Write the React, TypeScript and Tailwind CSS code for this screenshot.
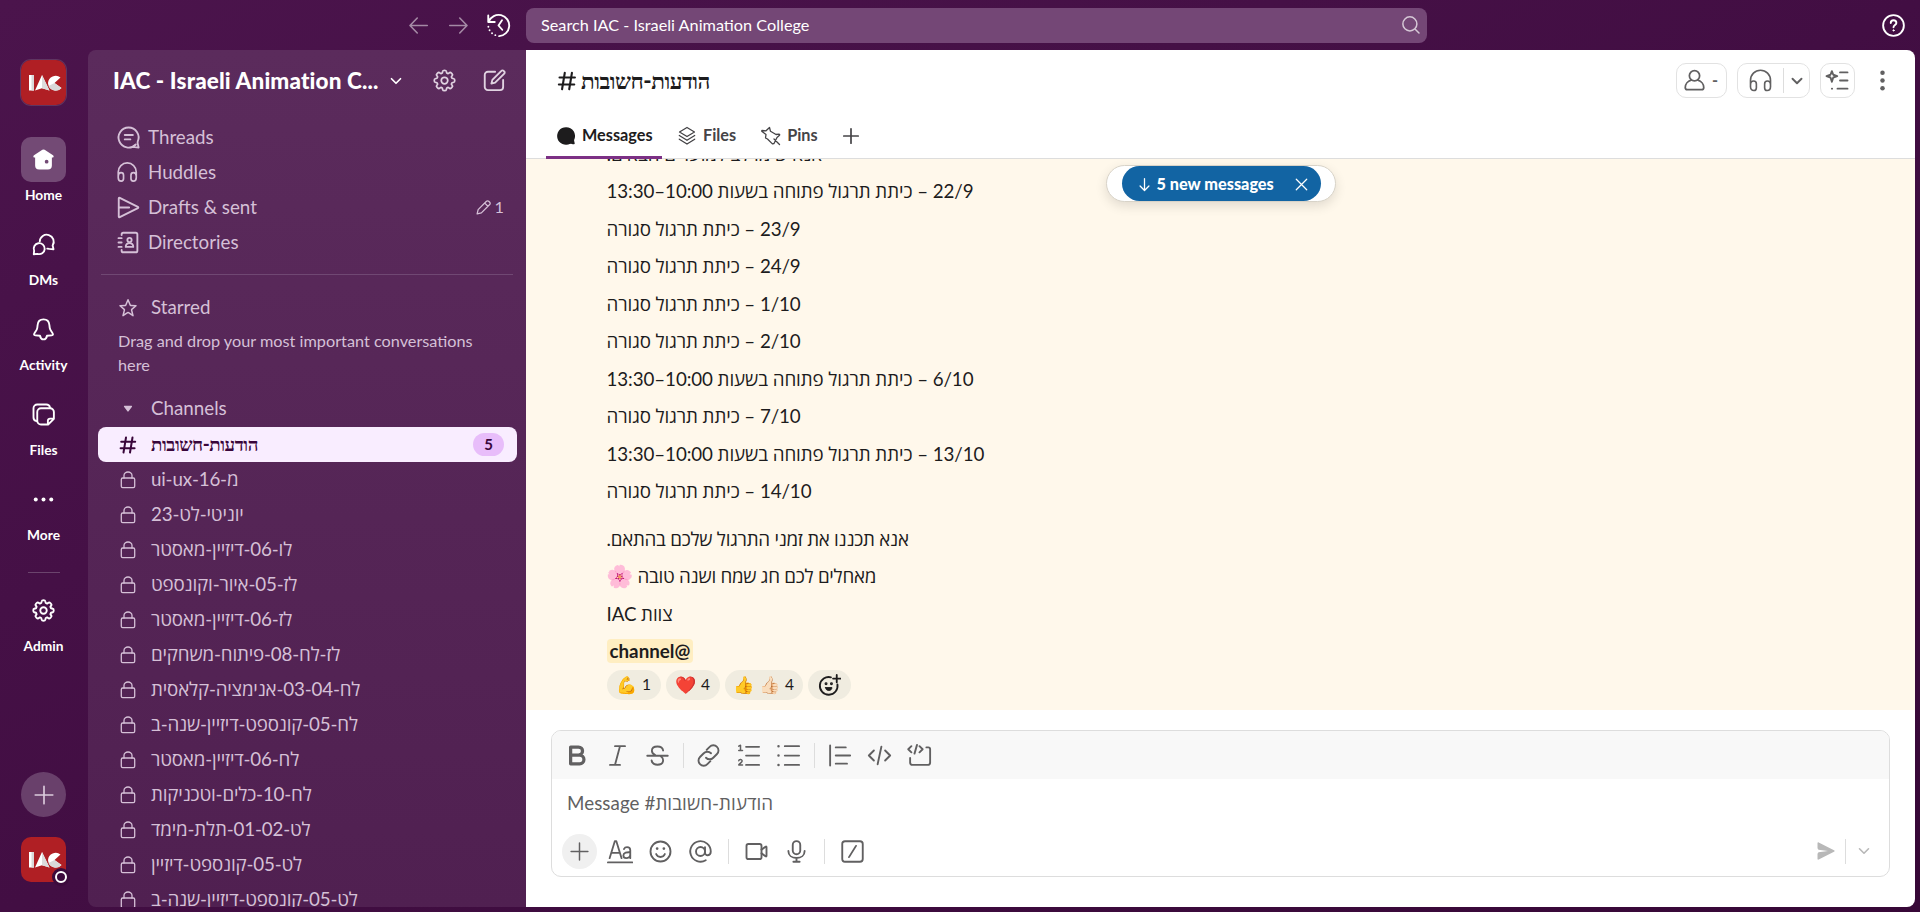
import React from "react";

type P = { d?: React.ReactNode; s?: number; w?: number; c?: string };

/* Line icon on a 20-unit grid */
function Ico({ d, s = 25, w = 1.5, c = "" }: P) {
  return (
    <svg width={s} height={s} viewBox="0 0 20 20" fill="none" stroke="currentColor" strokeWidth={w} strokeLinecap="round" strokeLinejoin="round" className={"shrink-0 " + c}>
      {d}
    </svg>
  );
}

const gear = (
  <>
    <path d="M8.6 2.4c.2-.9 2.600-.9 2.800 0l.4 1.500 1.100.5 1.400-.9c.6-.4 2.500 1.500 2.100 2.100l-.9 1.400.5 1.100 1.500.4c.9.2.9 2.600 0 2.800l-1.500.4-.5 1.100.9 1.400c.4.6-1.500 2.500-2.100 2.100l-1.400-.9-1.100.5-.4 1.500c-.2.9-2.600.9-2.800 0l-.4-1.500-1.100-.5-1.400.9c-.6.4-2.500-1.500-2.100-2.100l.9-1.400-.5-1.100-1.500-.4c-.9-.2-.9-2.600 0-2.800l1.500-.4.5-1.100-.9-1.400c-.4-.6 1.500-2.500 2.100-2.100l1.400.9 1.100-.5z" transform="translate(0 .1)" />
    <circle cx="10" cy="10" r="2.600" />
  </>
);
const hash = <path d="M8 2.500 5.500 17.500M14.500 2.500 12 17.500M3.200 6.750h14M2.600 13.200h14" />;
const lock = (
  <>
    <path d="M6 8V5.500C6 3.500 7.800 2 10 2s4 1.500 4 3.500V8" />
    <rect x="3.300" y="8" width="13.400" height="9.700" rx="1.400" />
  </>
);
const phones = (
  <path d="M2 15V9.800a8 8 0 0 1 16 0V15M2 13.500c0-1.900 1.100-3.100 2.500-3.100S6.700 11.400 6.700 12.700V15.700c0 1.300-.7 2.300-2 2.300C3 18 2 16.800 2 15zM18 13.500c0-1.900-1.100-3.100-2.500-3.100s-2.200 1-2.200 2.300v3c0 1.300.7 2.300 2 2.300C17 18 18 16.800 18 15z" />
);
const chev = <path d="m5.500 7.750 4.500 4.500 4.500-4.500" />;
const plus = <path d="M10 2v16M2 10h16" />;

function Logo() {
  return (
    <svg width="45" height="45" viewBox="0 0 45 45">
      <rect width="45" height="45" rx="10" fill="#b01f24" />
      <path d="M8 15h5v15.500H8z" fill="#fff" />
      <path d="M10.500 15H13v15.500h-2.500z" fill="#d9d9d9" />
      <path d="M21 15 28.500 30.500l-7.500-2.300-7 2.300z" fill="#fff" />
      <path d="M21 15 28.500 30.500l-7.500-2.300z" fill="#dcdcdc" />
      <path d="M39.500 17.500A7.800 7.800 0 0 0 27 23a7.800 7.800 0 0 0 13.500 5L33.500 23z" fill="#fff" />
      <path d="M27.500 26a7.800 7.800 0 0 0 13 2L33.500 23z" fill="#d9d9d9" />
    </svg>
  );
}

function RailItem({ label, active, children }: { label: string; active?: boolean; children: React.ReactNode }) {
  return (
    <div className="flex h-[85px] w-full shrink-0 flex-col items-center text-white">
      <div className={"flex size-[45px] items-center justify-center rounded-[10px] " + (active ? "bg-[#734a75]" : "")}>{children}</div>
      <span className="mt-[4px] text-[13.750px] leading-[18px] font-bold">{label}</span>
    </div>
  );
}

function NavRow({ label, icon, children }: { label: string; icon: React.ReactNode; children?: React.ReactNode }) {
  return (
    <div className="flex h-[35px] shrink-0 items-center pr-[22px] pl-[28px]">
      <Ico d={icon} />
      <span className="ml-[7px]">{label}</span>
      {children}
    </div>
  );
}

const channels = [
  "מ-16-ui-ux",
  "יוניטי-לט-23",
  "לו-06-דיזיין-מאסטר",
  "לז-05-איור-וקונספט",
  "לז-06-דיזיין-מאסטר",
  "לז-לח-08-פיתוח-משחקים",
  "לח-03-04-אנימציה-קלאסית",
  "לח-05-קונספט-דיזיין-שנה-ב",
  "לח-06-דיזיין-מאסטר",
  "לח-10-כלים-וטכניקות",
  "לט-01-02-תלת-מימד",
  "לט-05-קונספט-דיזיין",
  "לט-05-קונספט-דיזיין-שנה-ב",
];

const days = [
  "אנא שימו לב למועדים הבאים:",
  "22/9 – כיתת תרגול פתוחה בשעות 10:00–13:30",
  "23/9 – כיתת תרגול סגורה",
  "24/9 – כיתת תרגול סגורה",
  "1/10 – כיתת תרגול סגורה",
  "2/10 – כיתת תרגול סגורה",
  "6/10 – כיתת תרגול פתוחה בשעות 10:00–13:30",
  "7/10 – כיתת תרגול סגורה",
  "13/10 – כיתת תרגול פתוחה בשעות 10:00–13:30",
  "14/10 – כיתת תרגול סגורה",
];

function TopBar() {
  return (
    <header className="flex h-[50px] shrink-0 items-start pt-[8px]">
      <div className="flex h-[35px] w-[526px] items-center pl-[406px] text-white">
        <Ico s={25} c="opacity-50" w={1.300} d={<path d="M17 10H3.500M9 4 3.200 10 9 16" />} />
        <Ico s={25} c="ml-[15px] opacity-50" w={1.300} d={<path d="M3 10h13.500M11 4l5.800 6L11 16" />} />
        <Ico s={25} c="ml-[15px]" d={
          <>
            <path d="M1.800 2v5.200h5.200M2.200 6.800A8.500 8.500 0 1 1 10.500 18.500" />
            <path d="M12.800 5.800 10 10l3 3.400" />
            <path strokeDasharray="0 3" d="M1.900 11a8.500 8.500 0 0 0 6.500 7" />
          </>
        } />
      </div>
      <div className="flex h-[35px] w-[901px] items-center justify-between rounded-[8px] bg-[#744776] pr-[4px] pl-[15px] text-[16.250px] text-white">
        <span>Search IAC - Israeli Animation College</span>
        <Ico s={25} w={1.200} c="-mt-[3px] opacity-70" d={<><circle cx="9.500" cy="9.500" r="5.600" /><path d="m13.800 13.800 3 3" /></>} />
      </div>
      <div className="ml-auto flex h-[35px] items-center pr-[14px] text-white">
        <Ico s={25} d={<><circle cx="10" cy="10" r="8.300" /><path d="M7.800 8c0-1.300 1-2.200 2.200-2.200s2.300.8 2.300 2.100c0 1.600-2.300 1.800-2.300 3.500" /><circle cx="10" cy="13.900" r=".5" fill="currentColor" strokeWidth=".8" /></>} />
      </div>
    </header>
  );
}

function Rail() {
  return (
    <nav className="flex w-[88px] shrink-0 flex-col items-center pt-[10px] pr-[1px]">
      <div className="mb-[32px] size-[45px] shrink-0 rounded-[10px] shadow-[0_0_0_1px_#5f3561]"><Logo /></div>
      <RailItem label="Home" active>
        <svg width="25" height="25" viewBox="0 0 20 20" fill="#fff">
          <path fillRule="evenodd" d="M9.100 2.200a1.700 1.700 0 0 1 1.800 0l6.700 4.300c1 .7.500 1.900-.5 1.900h-.4v6.400a3.200 3.200 0 0 1-3.200 3.200h-7a3.200 3.200 0 0 1-3.200-3.200V8.400h-.4c-1 0-1.500-1.200-.5-1.900zM12.500 10.200a1.500 1.500 0 1 0 0 3 1.500 1.500 0 0 0 0-3" />
        </svg>
      </RailItem>
      <RailItem label="DMs">
        <Ico d={<><path d="M7 7.500A5.600 5.600 0 1 1 17.300 10.800L18 13.800 14.600 13.500 13 13.300" /><path d="M2.200 17.800 2.500 15a4.400 4.400 0 1 1 2.700 2.500z" /></>} />
      </RailItem>
      <RailItem label="Activity">
        <Ico d={<path d="M10 1.900c-2.700 0-4.500 1.800-4.700 4.500l-.3 2.400c-.2 1.400-1 2.300-2 3.800-.9 1.300-.8 2 .5 2.100l3.700.3c.3 1.700 1.300 2.900 2.800 2.900s2.500-1.200 2.800-2.900l3.700-.3c1.300-.1 1.400-.8.5-2.100-1-1.500-1.800-2.400-2-3.800l-.3-2.400C14.500 3.700 12.700 1.900 10 1.900z" />} />
      </RailItem>
      <RailItem label="Files">
        <Ico d={<><path d="M4.500 15.300A3 3 0 0 1 2 12.200V5A3 3 0 0 1 5 2h7.300a3 3 0 0 1 2.900 2.300" /><path d="M8 5h7.300a3 3 0 0 1 3 3v5.500L13.700 18H8a3 3 0 0 1-3-3V8a3 3 0 0 1 3-3zM13.500 18v-3a1.700 1.700 0 0 1 1.700-1.700h3" /></>} />
      </RailItem>
      <RailItem label="More">
        <svg width="25" height="25" viewBox="0 0 20 20" fill="#fff"><circle cx="3.800" cy="10" r="1.600" /><circle cx="10" cy="10" r="1.600" /><circle cx="16.200" cy="10" r="1.600" /></svg>
      </RailItem>
      <div className="mt-[10px] mb-[15px] h-px w-[32px] shrink-0 bg-[#6b446d]" />
      <RailItem label="Admin"><Ico d={gear} /></RailItem>
      <div className="mt-auto mb-[20px] flex size-[45px] shrink-0 items-center justify-center rounded-full bg-[#69406b] text-[#dccbdd]">
        <Ico s={22} w={1.500} d={plus} />
      </div>
      <div className="relative mb-[25px] size-[45px] shrink-0">
        <Logo />
        <div className="absolute top-[31px] left-[31px] flex size-[18px] items-center justify-center rounded-full bg-[#3c0b3c]">
          <div className="size-[12px] rounded-full border-2 border-white" />
        </div>
      </div>
    </nav>
  );
}

function Sidebar() {
  return (
    <aside className="flex w-[438px] shrink-0 flex-col overflow-hidden rounded-l-[8px] bg-linear-to-b from-[#5b2b5c] to-[#502051] text-[18.750px] text-[#d5c0d7]">
      <div className="flex h-[61px] shrink-0 items-center pl-[25px] text-white">
        <span className="font-['Lato_Black','Lato',sans-serif] text-[22.500px] font-black tracking-[0.140px] whitespace-nowrap">IAC - Israeli Animation C...</span>
        <Ico s={20} w={1.700} c="ml-[7px]" d={chev} />
        <Ico c="ml-[26px] text-[#e0d2e1]" w={1.400} d={gear} />
        <Ico c="ml-[25px] text-[#e0d2e1]" d={<><path d="M10.500 3H4.800A2.500 2.500 0 0 0 2.200 5.500v9.700a2.500 2.500 0 0 0 2.500 2.500h9.700a2.500 2.500 0 0 0 2.500-2.500V9.500" /><path d="m7.500 12.500.8-3L15.500 2.300a1.200 1.200 0 0 1 1.800 0l.5.5a1.200 1.200 0 0 1 0 1.700L10.500 11.700z" /></>} />
      </div>
      <div className="h-[9px] shrink-0" />
      <NavRow label="Threads" icon={<><path d="M15.800 15.600a8 8 0 1 1 1.600-2.400c-.3.800-.1 1.500.1 2.300l.6 2.500-3-.3c-.8-.1-1.400-.3-2.200 0" /><path d="M7 8h6.500M7 11.500h4.500" /></>} />
      <NavRow label="Huddles" icon={<g transform="translate(0 .7) scale(.9)">{phones}</g>} />
      <NavRow label="Drafts & sent" icon={<><path d="M2.200 2.800v14.400c0 .6.300.7.800.5l14.500-7.200c.5-.3.500-.7 0-1L3 2.300c-.5-.2-.8-.1-.8.500zM2.500 10h8" /></>}>
        <span className="ml-auto flex items-center gap-[3px] text-[16.250px]">
          <Ico s={17} w={1.500} d={<path d="m2.500 17.500 1.200-5L13.500 2.700a1.800 1.800 0 0 1 2.600 0l1.200 1.200a1.800 1.800 0 0 1 0 2.600L7.500 16.300zM11.500 4.800l3.700 3.700" />} />1
        </span>
      </NavRow>
      <NavRow label="Directories" icon={<><path d="M4.500 4V3.500A1.300 1.300 0 0 1 5.800 2.200h10a1.300 1.300 0 0 1 1.300 1.300v13a1.300 1.300 0 0 1-1.300 1.300h-10a1.300 1.300 0 0 1-1.300-1.300V16M2 6.500h2.500M2 10h2.500M2 13.500h2.500" /><circle cx="10.800" cy="8" r="1.700" /><path d="M7.800 13.500c0-2 1.200-3 3-3s3 1 3 3z" /></>} />
      <div className="mx-[13px] mt-[14px] mb-[15px] h-px shrink-0 bg-[#704873]" />
      <div className="flex h-[35px] shrink-0 items-center pl-[30px]">
        <Ico s={20} w={1.500} d={<path d="m10 1.800 2.200 5.200c.1.300.3.400.6.400l5.200.4-4.200 3.600c-.2.200-.3.400-.2.700l1.400 5.600-4.500-3c-.3-.2-.6-.2-.9 0l-4.600 3 1.400-5.600c.1-.3 0-.5-.2-.7L2 7.800l5.200-.4c.3 0 .5-.1.600-.4z" />} />
        <span className="ml-[13px]">Starred</span>
      </div>
      <p className="w-[400px] shrink-0 pt-[4px] pl-[30px] text-[16.250px] leading-[24px]">Drag and drop your most important conversations here</p>
      <div className="mt-[14px] flex h-[35px] shrink-0 items-center pl-[35px]">
        <svg width="10" height="8" viewBox="0 0 10 8"><path d="M1.500.8h7a.7.700 0 0 1 .5 1L5.600 6.300a.8.800 0 0 1-1.200 0L1 1.800a.7.700 0 0 1 .5-1z" fill="currentColor" /></svg>
        <span className="ml-[18px]">Channels</span>
      </div>
      <div className="mt-px mr-[9px] ml-[10px] flex h-[35px] shrink-0 items-center rounded-[8px] bg-[#f9edff] pr-[13px] pl-[20px] text-[#39063a]">
        <Ico s={20} w={2} d={hash} />
        <bdi dir="rtl" className="ml-[13px] font-['Lato','Liberation_Serif',serif] font-black tracking-[-0.450px]">הודעות-חשובות</bdi>
        <span className="ml-auto flex h-[23px] w-[31px] items-center justify-center rounded-full bg-[#e8bdfa] text-[15px] font-bold">5</span>
      </div>
      {channels.map((c) => (
        <div key={c} className="flex h-[35px] shrink-0 items-center pl-[30px]">
          <Ico s={20} w={1.300} d={lock} />
          <bdi dir="rtl" className="ml-[13px] tracking-[-0.170px] whitespace-nowrap">{c}</bdi>
        </div>
      ))}
    </aside>
  );
}

function Header() {
  return (
    <div className="h-[109px] shrink-0 border-b border-[#dddddd]">
      <div className="flex h-[61px] items-center pr-[20px] pl-[30px] text-[#1d1c1d]">
        <Ico s={22} w={1.900} d={hash} />
        <h1 dir="rtl" className="ml-[3px] font-['Lato','Liberation_Serif',serif] text-[22.500px] font-black tracking-[-0.500px]">הודעות-חשובות</h1>
        <div className="ml-auto flex items-center text-[#616061]">
          <div className="flex h-[35px] w-[51px] items-center rounded-[10px] border border-[#e2e2e2] pl-[5px] text-[16.250px] font-bold">
            <Ico s={25} w={1.400} d={<><circle cx="10" cy="6.200" r="4.100" /><path d="M7.300 9.700C4.500 10.500 2.600 13 2.600 15.500c0 1.200.6 1.800 1.600 1.800h11.600c1 0 1.600-.6 1.600-1.800 0-2.500-1.900-5-4.700-5.800" /></>} />
            <span className="ml-[5px]">-</span>
          </div>
          <div className="ml-[10px] flex h-[35px] w-[73px] items-center rounded-[10px] border border-[#e2e2e2] pl-[10px]">
            <Ico s={25} w={1.300} d={phones} />
            <div className="ml-[10px] h-[25px] w-px bg-[#dddddd]" />
            <Ico s={20} w={1.900} c="ml-[3px]" d={chev} />
          </div>
          <div className="ml-[10px] flex size-[35px] items-center justify-center rounded-[10px] border border-[#e2e2e2]">
            <Ico s={25} w={1.500} d={<path d="M5.500 2.500 6.600 5.400 9.800 6.500 6.600 7.600 5.500 11 4.400 7.600 1.200 6.500l3.200-1.100zM12 3.500h6M12 10h6M10 16.500h8M5.500 16.500h.2" />} />
          </div>
          <svg width="25" height="25" viewBox="0 0 20 20" fill="currentColor" className="ml-[15px]"><circle cx="10" cy="3.800" r="1.800" /><circle cx="10" cy="10" r="1.800" /><circle cx="10" cy="16.200" r="1.800" /></svg>
        </div>
      </div>
      <div className="flex h-[48px] items-center pl-[20px] text-[16.250px] font-bold text-[#454447]">
        <div className="flex h-[48px] w-[116px] items-center border-b-[3px] border-[#7c3085] pt-[4px] pl-[10px] text-[#1d1c1d]">
          <svg width="20" height="20" viewBox="0 0 20 20" fill="#1d1c1d"><path d="M10 1.200a8.800 8.800 0 1 0 4.200 16.500c.9.200 2.300.6 3.700.6.600 0 .9-.4.800-1-.3-1.500-.7-2.500-.6-3.300A8.800 8.800 0 0 0 10 1.200" /></svg>
          <span className="ml-[6px]">Messages</span>
        </div>
        <div className="flex items-center pt-px pl-[15px]">
          <Ico s={20} w={1.300} d={<path d="M10 1.500 17.500 6 10 10.500 2.500 6zM2.300 9.500 10 14.300l7.700-4.800M2.300 13.200 10 18l7.700-4.800" />} />
          <span className="ml-[6px]">Files</span>
        </div>
        <div className="flex items-center pt-px pl-[25px]">
          <Ico s={20} w={1.300} d={<path d="M8.500 1.500 9.500 5.300 15 8.500l3-.3c.7 0 .8.500.5 1L16 11.500l-3 6-1.600.4L6.500 13 4.500 12 5 8.500 1 5.500C.5 5 .7 4.600 1.200 4.500L5 4.800zM13 13l5.500 5.500" />} />
          <span className="ml-[6px]">Pins</span>
        </div>
        <Ico s={18} w={1.900} c="mt-px ml-[24px]" d={plus} />
      </div>
    </div>
  );
}

function Messages() {
  return (
    <section className="relative h-[551px] shrink-0 overflow-hidden bg-[#fff8eb] text-[18.750px] text-[#1d1c1d]">
      <div className="-mt-[24.500px] flex flex-col pl-[80.500px] tracking-[-0.080px]">
        {days.map((t) => (
          <p key={t} dir="rtl" className="h-[37.500px] text-left leading-[37.500px]">{t}</p>
        ))}
        <p dir="rtl" className="mt-[10px] h-[37.500px] text-left leading-[37.500px] tracking-[-0.250px]">אנא תכננו את זמני התרגול שלכם בהתאם.</p>
        <div dir="rtl" className="flex h-[37.500px] flex-row items-center justify-end gap-[5px] tracking-[-0.260px]">
          <span>מאחלים לכם חג שמח ושנה טובה</span>
          <span className="-ml-[1px] text-[22px] leading-[24px] tracking-normal">🌸</span>
        </div>
        <p dir="rtl" className="h-[37.500px] text-left leading-[37.500px]">צוות IAC</p>
        <div className="flex h-[38px] items-center tracking-normal">
          <bdi dir="rtl" className="h-[24px] rounded-[4px] bg-[#ffeec2] px-[3px] leading-[24px] font-bold">@channel</bdi>
        </div>
        <div className="flex gap-[5px] text-[15.500px] tracking-normal text-[#1d1c1d] [&>div]:flex [&>div]:h-[30px] [&>div]:items-center [&>div]:justify-center [&>div]:gap-[5px] [&>div]:rounded-full [&>div]:bg-[#f0ece0]">
          <div className="w-[54px]"><span className="text-[17px]">💪</span>1</div>
          <div className="w-[54px]"><span className="text-[17px]">❤️</span>4</div>
          <div className="w-[78px]"><span className="text-[17px]">👍</span><span className="text-[17px]">👍🏻</span>4</div>
          <div className="w-[43px]">
            <Ico s={23} w={1.600} d={<><path d="M11.300 2.900A7.700 7.700 0 1 0 16.900 9" /><path d="M16.300.8v6.400M13.100 4h6.400" /><circle cx="7" cy="8.500" r=".5" fill="currentColor" /><circle cx="11.700" cy="8.500" r=".5" fill="currentColor" /><path d="M6.600 11.800h5.500c0 1.700-1.300 2.600-2.750 2.600s-2.750-.9-2.750-2.600z" fill="currentColor" strokeWidth=".8" /></>} />
          </div>
        </div>
      </div>
      <div className="absolute top-[6px] left-[580px] flex h-[37px] w-[230px] justify-center rounded-full border border-[#d8d3c8] bg-white shadow-[0_4px_12px_rgba(0,0,0,0.12)]">
        <div className="flex h-[35px] w-[199px] items-center rounded-full bg-[#1264a3] pt-px pl-[14px] text-[16.250px] font-black text-white">
          <Ico s={17} w={1.500} d={<path d="M10 3v13.500M4.800 11.800 10 17l5.200-5.200" />} />
          <span className="ml-[4px] whitespace-nowrap">5 new messages</span>
          <Ico s={19} w={1.300} c="ml-[18px]" d={<path d="m4.500 4.500 11 11M15.500 4.500l-11 11" />} />
        </div>
      </div>
    </section>
  );
}

const Sep = ({ c = "" }: { c?: string }) => <div className={"h-[25px] w-px shrink-0 bg-[#dddddd] " + c} />;

function Composer() {
  return (
    <div className="mt-[20px] ml-[25px] h-[147px] w-[1339px] overflow-hidden rounded-[10px] border border-[#dddddd] text-[#616061]">
      <div className="flex h-[48px] items-center bg-[#f8f8f8] pt-[1px] pl-[13px] [&>svg]:mr-[15px]">
        <Ico w={2.600} d={<path d="M4.500 3.200h6.300a3.200 3.200 0 0 1 0 6.500H4.500zM4.500 9.700h7.200a3.400 3.400 0 0 1 0 6.900H4.500z" />} />
        <Ico d={<path d="M8 2.500h8M4 17.500h8M12 2.500l-4 15" />} />
        <Ico d={<path d="M14.500 6c-.3-2-2-3.200-4.500-3.200S5.500 4 5.500 6.200c0 1.500 1 2.600 2.500 3.200M1.800 10.200h16.400M5.300 14c.4 2.200 2.200 3.400 4.700 3.400s4.500-1.300 4.500-3.600c0-1.300-.5-2.300-1.700-3" />} />
        <Sep c="mr-[12px] -ml-[2px]" />
        <Ico d={<><path d="m8.500 5.500 2.400-2.400a4 4 0 0 1 5.900 0 4 4 0 0 1 0 5.700l-3 3a4 4 0 0 1-5.800 0" /><path d="m11.500 14.500-2.400 2.400a4 4 0 0 1-5.900 0 4 4 0 0 1 0-5.700l3-3a4 4 0 0 1 5.800 0" /></>} />
        <Ico w={1.400} d={<><path d="M8 3h10.500M8 10h10.500M8 17.500h10.500" /><path strokeWidth="1.200" d="M2.200 2.500 3.600 1.800v4M2.200 5.900h3M2.200 14.200c.2-1.300 2.800-1.200 2.700.2 0 1-1.800 1.800-2.700 3.100h3" /></>} />
        <Ico w={1.400} d={<><path d="M7 2.500h11.500M7 10h11.500M7 17.500h11.500" /><path strokeWidth="2" d="M2 2.500h0M2 10h0M2 17.500h0" /></>} />
        <Sep c="mr-[12px] -ml-[2px]" />
        <Ico d={<path d="M2.500 2v16M7 3.500h8M7 10h11.500M7 16.500h9" />} />
        <Ico d={<path d="M5.500 6 1.500 10l4 4M14.500 6l4 4-4 4M11.500 3l-3 14" />} />
        <Ico d={<path d="M3.500 2.500 1 5l2.500 2.500M10 2.500 12.500 5 10 7.500M8 1.500 6 8.500M15.500 3.500h1.500a1.500 1.500 0 0 1 1.500 1.500v10.500a2 2 0 0 1-2 2H4.500a2 2 0 0 1-2-2V12" />} />
      </div>
      <div className="flex h-[48px] items-center pl-[15px] text-[18.750px] tracking-[0.070px]">Message #הודעות-חשובות</div>
      <div className="mt-[2px] flex h-[44px] items-center pl-[10px]">
        <div className="flex size-[35px] shrink-0 items-center justify-center rounded-full bg-[#f0f0f0]"><Ico s={21} w={1.400} d={plus} /></div>
        <Ico s={26} w={1.400} c="ml-[10px]" d={<><path d="M2 15.500 6 2.500h1.200l4 13M3.300 11.500H9.800" /><path d="M13 8.500c.5-1 1.300-1.500 2.400-1.500 1.500 0 2.500.9 2.500 2.500v6M17.900 11c-2.500-.2-5.300.2-5.300 2.500 0 1.300 1 2 2.200 2 1.700 0 3.100-1.200 3.100-3" /><path d="M.7 18.800h18.800" /></>} />
        <Ico c="ml-[15px]" d={<><circle cx="10" cy="10" r="8" /><path d="M6.500 12c.6 1.500 1.900 2.400 3.500 2.400s2.900-.9 3.500-2.400" /><path strokeWidth="2.200" d="M7.300 7.600h0M12.700 7.600h0" /></>} />
        <Ico c="ml-[15px]" d={<><circle cx="10" cy="10" r="3.600" /><path d="M13.600 6.500v4.200c0 3.300 4.600 3 4.600-.7a8.200 8.200 0 1 0-4 7" /></>} />
        <Sep c="ml-[15px]" />
        <Ico c="ml-[15px]" d={<><rect x="2" y="4" width="12" height="12" rx="1.500" /><path d="m14 8.500 3.200-2.300c.5-.3.800-.2.800.4v6.800c0 .6-.3.700-.8.400L14 11.500" /></>} />
        <Ico c="ml-[15px]" d={<><rect x="7" y="1.700" width="6" height="10.500" rx="3" /><path d="M3.500 9.500c0 3.500 2.800 5.700 6.500 5.700s6.500-2.200 6.500-5.700M10 15.200V18M7.500 18.200h5" /></>} />
        <Sep c="ml-[15px]" />
        <Ico c="ml-[15px]" d={<><rect x="1.800" y="1.800" width="16.400" height="16.400" rx="2.200" /><path d="M12.800 5.500 7.200 14.500" /></>} />
        <svg width="20" height="20" viewBox="0 0 20 20" fill="#b8b8b8" className="ml-auto"><path d="M1.500 2.200c0-.8.500-1.100 1.200-.8L18 9.200c.8.400.8 1.200 0 1.600L2.700 18.600c-.7.300-1.200 0-1.200-.8v-5l1-1.500L12 10 2.500 8.700l-1-1.500z" /></svg>
        <Sep c="ml-[9px]" />
        <Ico s={20} w={1.600} c="mr-[15px] ml-[8px] text-[#b8b8b8]" d={chev} />
      </div>
    </div>
  );
}

export default function App() {
  return (
    <div className="flex h-[912px] w-[1920px] flex-col overflow-hidden bg-[#3f0c40] bg-linear-to-br from-[#4b144c] via-[#420e43] to-[#370837] font-['Lato','Open_Sans',sans-serif]">
      <TopBar />
      <div className="flex h-[857px] shrink-0">
        <Rail />
        <Sidebar />
        <main className="flex w-[1389px] flex-col overflow-hidden rounded-r-[8px] bg-white">
          <Header />
          <Messages />
          <Composer />
        </main>
      </div>
    </div>
  );
}
